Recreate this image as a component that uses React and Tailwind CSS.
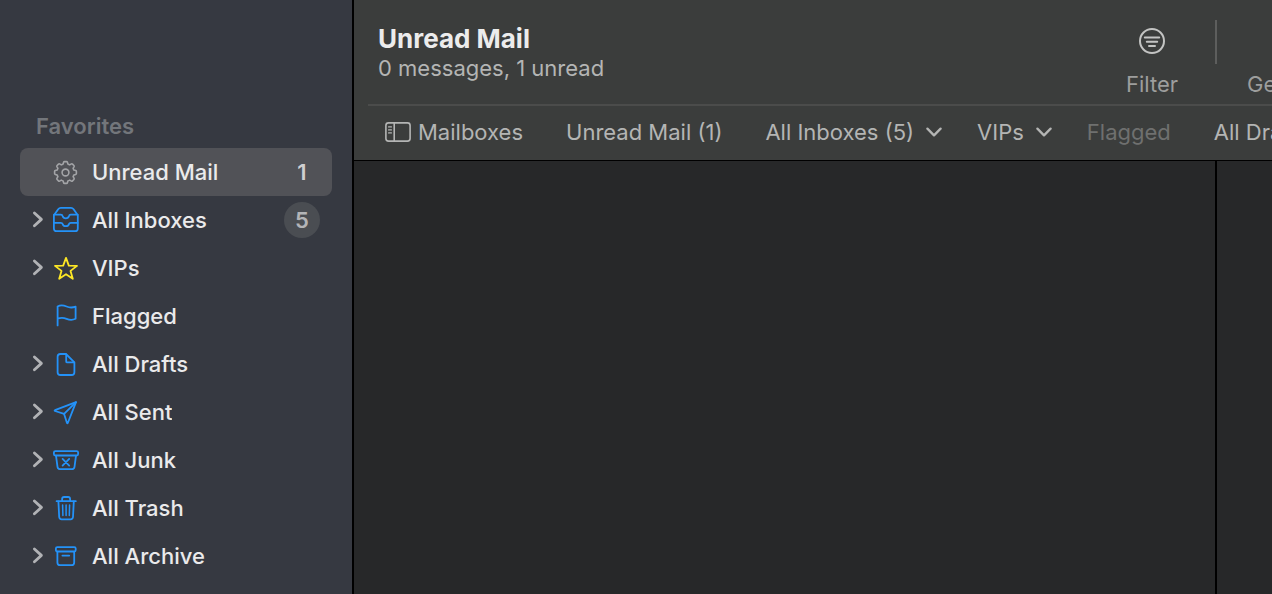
import React from 'react';
import clsx from 'clsx';

const Icon = ({ children, className }) => (
    <svg
        viewBox="0 0 28 28"
        className={clsx('size-7 shrink-0', className)}
        fill="none"
        stroke="currentColor"
        strokeWidth="1.8"
        strokeLinecap="round"
        strokeLinejoin="round"
        aria-hidden="true"
    >
        {children}
    </svg>
);

const GearIcon = () => (
    <Icon className="text-[#a3a4a7]">
        <g transform="translate(13.5 14.5)" strokeWidth="1.6">
            <path d="M-2.4 -8.4 L-1.9 -10.2 Q-1.7 -10.9 -1 -10.9 H1 Q1.7 -10.9 1.9 -10.2 L2.4 -8.4 Q3.4 -8 4.2 -7.6 L5.9 -8.6 Q6.5 -8.9 7 -8.4 L8.4 -7 Q8.9 -6.5 8.6 -5.9 L7.6 -4.2 Q8 -3.4 8.4 -2.4 L10.2 -1.9 Q10.9 -1.7 10.9 -1 V1 Q10.9 1.7 10.2 1.9 L8.4 2.4 Q8 3.4 7.6 4.2 L8.6 5.9 Q8.9 6.5 8.4 7 L7 8.4 Q6.5 8.9 5.9 8.6 L4.2 7.6 Q3.4 8 2.4 8.4 L1.9 10.2 Q1.7 10.9 1 10.9 H-1 Q-1.7 10.9 -1.9 10.2 L-2.4 8.4 Q-3.4 8 -4.2 7.6 L-5.9 8.6 Q-6.5 8.9 -7 8.4 L-8.4 7 Q-8.9 6.5 -8.6 5.9 L-7.6 4.2 Q-8 3.4 -8.4 2.4 L-10.2 1.9 Q-10.9 1.7 -10.9 1 V-1 Q-10.9 -1.7 -10.2 -1.9 L-8.4 -2.4 Q-8 -3.4 -7.6 -4.2 L-8.6 -5.9 Q-8.9 -6.5 -8.4 -7 L-7 -8.4 Q-6.5 -8.9 -5.9 -8.6 L-4.2 -7.6 Q-3.4 -8 -2.4 -8.4 Z" />
            <circle r="3.4" />
        </g>
    </Icon>
);

const InboxIcon = () => (
    <Icon className="text-[#2492f8]">
        <path d="M1.9 9.2 L6.2 3.2 Q7.2 1.9 8.8 1.9 H19 Q20.6 1.9 21.6 3.2 L25.8 9.2 V22.4 Q25.8 25.2 23 25.2 H4.7 Q1.9 25.2 1.9 22.4 Z" />
        <path d="M2 8.6 H8.8 Q10.3 8.6 10.6 10 Q11.2 12.3 13.8 12.3 Q16.4 12.3 17 10 Q17.3 8.6 18.8 8.6 H25.7" />
        <path d="M2 16.8 H8.8 Q10.3 16.8 10.6 18 Q11.2 20.2 13.8 20.2 Q16.4 20.2 17 18 Q17.3 16.8 18.8 16.8 H25.7" />
    </Icon>
);

const StarIcon = () => (
    <Icon className="text-[#fde725]">
        <path d="M14 3.9 L16.8 11.6 L25 11.9 L18.5 16.9 L20.8 24.8 L14 20.2 L7.2 24.8 L9.5 16.9 L3 11.9 L11.2 11.6 Z" />
    </Icon>
);

const FlagIcon = () => (
    <Icon className="text-[#2492f8]">
        <path d="M5.6 23.4 V4.6 C8 3 11.6 3.2 14.6 4.5 C17.6 5.8 20.4 5.9 23.6 4.6 V16.8 C20.4 18.3 17.6 18.1 14.6 16.8 C11.6 15.6 8.4 15.5 5.6 16.8" />
    </Icon>
);

const DocIcon = () => (
    <Icon className="text-[#2492f8]">
        <path d="M8.4 4 H14 L22.4 12.4 V22.2 Q22.4 25 19.6 25 H8.4 Q5.6 25 5.6 22.2 V6.8 Q5.6 4 8.4 4 Z" />
        <path d="M14.2 4.4 V11.4 Q14.2 12.4 15.2 12.4 H22" />
    </Icon>
);

const SentIcon = () => (
    <Icon className="text-[#2492f8]">
        <path d="M24 4.2 L15.8 25 Q15.3 25.6 14.9 24.8 L12.1 15.9 L3 13 Q2.2 12.6 3 12.2 Z" />
        <path d="M24 4.2 L12.1 15.9" />
    </Icon>
);

const JunkIcon = () => (
    <Icon className="text-[#2492f8]">
        <rect x="1.9" y="5.1" width="24.2" height="4.4" rx="1.4" />
        <path d="M4 9.6 L5.5 20.8 Q5.9 23.2 8.2 23.2 H19.8 Q22.1 23.2 22.5 20.8 L24 9.6" />
        <path d="M10.6 12.9 L17.2 19.6 M17.2 12.9 L10.6 19.6" />
    </Icon>
);

const TrashIcon = () => (
    <Icon className="text-[#2492f8]">
        <path d="M4.6 7.2 H23.8 M10.1 7 V5 Q10.1 3 12.1 3 H16.1 Q18.1 3 18.1 5 V7" />
        <path d="M6.4 7.4 L7.2 23 Q7.4 25.3 9.6 25.3 H18.6 Q20.8 25.3 21 23 L21.8 7.4" />
        <path d="M10.6 11 L10.9 21.6 M14.1 11 V21.6 M17.6 11 L17.3 21.6" strokeWidth="1.5" />
    </Icon>
);

const ArchiveIcon = () => (
    <Icon className="text-[#2492f8]">
        <rect x="3.9" y="5.1" width="19.8" height="4.4" rx="1.4" />
        <path d="M5.4 9.6 V20.4 Q5.4 23.2 8.2 23.2 H19.4 Q22.2 23.2 22.2 20.4 V9.6" />
        <path d="M10.4 13.6 H17.2" />
    </Icon>
);

const ChevronRight = () => (
    <svg viewBox="0 0 12 18" className="h-[18px] w-3" fill="none" stroke="currentColor" strokeWidth="2.8" strokeLinecap="round" strokeLinejoin="round" aria-hidden="true">
        <path d="M2.4 2 L9.4 8.4 L2.4 14.8" />
    </svg>
);

const ChevronDown = () => (
    <svg viewBox="0 0 16 10" className="h-[10px] w-4" fill="none" stroke="currentColor" strokeWidth="2.3" strokeLinecap="round" strokeLinejoin="round" aria-hidden="true">
        <path d="M1.4 1.6 L8 8.4 L14.6 1.6" />
    </svg>
);

const MailboxesIcon = () => (
    <svg viewBox="0 0 26 20" className="h-5 w-[26px]" fill="none" stroke="currentColor" strokeWidth="1.6" strokeLinecap="round" aria-hidden="true">
        <rect x="0.9" y="0.9" width="24.2" height="18.2" rx="2.6" />
        <path d="M9.2 1 V19" />
        <path d="M3.6 4.9 H6.4 M3.6 7.9 H6.4 M3.6 10.9 H6.4" strokeWidth="1.3" />
    </svg>
);

const FilterIcon = () => (
    <Icon className="text-[#c3c4c3]">
        <circle cx="14" cy="14" r="12" strokeWidth="2" />
        <path d="M6.8 10.6 H21.2 M8.8 14.8 H19.2 M11 19 H17" strokeWidth="2" />
    </Icon>
);

const mailboxes = [
    { name: 'Unread Mail', icon: GearIcon, count: 1, selected: true },
    { name: 'All Inboxes', icon: InboxIcon, count: 5, expandable: true },
    { name: 'VIPs', icon: StarIcon, expandable: true },
    { name: 'Flagged', icon: FlagIcon },
    { name: 'All Drafts', icon: DocIcon, expandable: true },
    { name: 'All Sent', icon: SentIcon, expandable: true },
    { name: 'All Junk', icon: JunkIcon, expandable: true },
    { name: 'All Trash', icon: TrashIcon, expandable: true },
    { name: 'All Archive', icon: ArchiveIcon, expandable: true },
];

const favorites = [
    { name: 'Unread Mail (1)' },
    { name: 'All Inboxes (5)', menu: true },
    { name: 'VIPs', menu: true },
    { name: 'Flagged', disabled: true },
    { name: 'All Drafts' },
];

const MailboxRow = ({ name, icon: RowIcon, count, selected, expandable }) => (
    <li className={clsx('flex h-12 items-center rounded-lg pr-3', selected && 'bg-[#515257]')}>
        <div className="flex w-8 shrink-0 justify-start pl-3 text-[#b1b2b5]">
            {expandable && (
                <button type="button" aria-label={`Expand ${name}`}>
                    <ChevronRight />
                </button>
            )}
        </div>
        <button type="button" className="flex min-w-0 flex-1 items-center gap-3 text-left text-[#eaeaeb]">
            <RowIcon />
            <span className="truncate">{name}</span>
        </button>
        {count && (
            <span
                className={clsx(
                    'flex size-9 items-center justify-center rounded-full font-semibold',
                    selected ? 'text-[#cfcfd1]' : 'bg-[#4a4d52] text-[#b3b4b7]'
                )}
            >
                {count}
            </span>
        )}
    </li>
);

const Sidebar = () => (
    <nav className="w-[354px] shrink-0 border-r-2 border-black bg-[#363941] px-5 pt-28">
        <h2 className="mb-2 pl-4 font-semibold leading-7 text-[#73767b]">Favorites</h2>
        <ul className="font-medium">
            {mailboxes.map((box) => (
                <MailboxRow key={box.name} {...box} />
            ))}
        </ul>
    </nav>
);

const App = () => {
    return (
        <div className="flex h-screen overflow-hidden bg-[#272829] font-['Inter','Liberation_Sans',sans-serif] text-[22px] leading-7">
            <Sidebar />

            <main className="flex min-w-0 flex-1 flex-col">
                <header className="border-b border-black bg-[#3b3d3c]">
                    {/* Toolbar */}
                    <div className="flex h-[104px]">
                        <div className="min-w-0 flex-1 pl-6 pt-6">
                            <h1 className="text-[26px] font-bold leading-[30px] text-[#ececec]">Unread Mail</h1>
                            <p className="text-[#b4b5b4]">0 messages, 1 unread</p>
                        </div>
                        <button type="button" className="mr-[37px] flex flex-col items-center gap-[15px] pt-[27px] text-[#9d9e9d]">
                            <FilterIcon />
                            <span>Filter</span>
                        </button>
                        <div className="mt-5 h-11 w-[2px] bg-[#5d5e5d]" />
                        <div className="flex w-[55px] items-start overflow-hidden pl-[30px] pt-[70px]">
                            <button type="button" className="shrink-0 whitespace-nowrap text-[#9d9e9d]">Get Mail</button>
                        </div>
                    </div>

                    {/* Favorites bar */}
                    <div className="ml-[14px] flex h-14 items-center gap-[43px] overflow-hidden border-t-2 border-[#4b4c4b] pb-0.5 pl-[17px] text-[#b4b5b4]">
                        <button type="button" className="flex shrink-0 items-center gap-[7px]">
                            <MailboxesIcon />
                            Mailboxes
                        </button>
                        {favorites.map((item) => (
                            <button
                                key={item.name}
                                type="button"
                                disabled={item.disabled}
                                className={clsx(
                                    'flex shrink-0 items-center gap-3 whitespace-nowrap disabled:text-[#6f706f]',
                                    item.menu && '-mr-2'
                                )}
                            >
                                {item.name}
                                {item.menu && <ChevronDown />}
                            </button>
                        ))}
                    </div>
                </header>

                <div className="flex flex-1">
                    <section className="flex-1 border-r-2 border-black" aria-label="Messages" />
                    <section className="w-[55px]" aria-label="Preview" />
                </div>
            </main>
        </div>
    );
};

export default App;
